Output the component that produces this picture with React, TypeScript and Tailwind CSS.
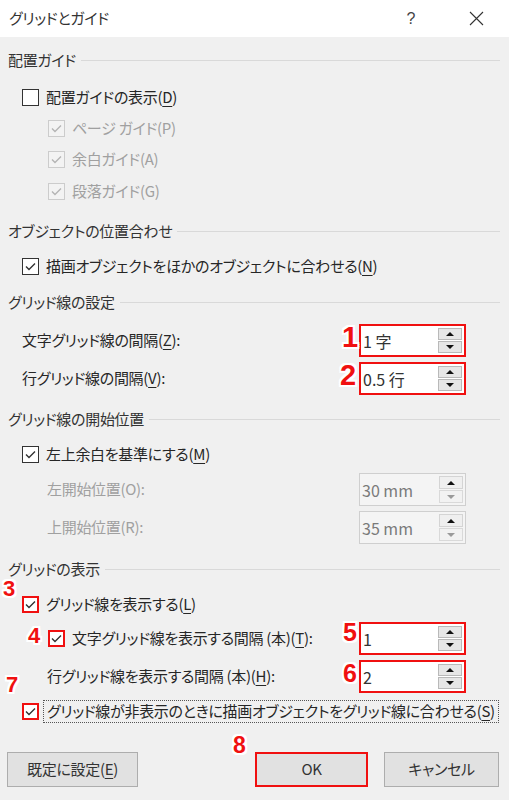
import React from "react";

const Tick = ({ color }: { color: string }) => (
  <svg width="13" height="13" viewBox="0 0 13 13" className="block">
    <polyline points="2,6.5 5,9.5 11,3.5" fill="none" stroke={color} strokeWidth="1.4" />
  </svg>
);

const Checkbox = ({ checked, disabled, red }: { checked?: boolean; disabled?: boolean; red?: boolean }) => {
  let cls = "border border-[#333] bg-white";
  if (disabled) cls = "border border-[#cccccc] bg-[#f3f3f3]";
  if (red) cls = "border-2 border-[#f01010] bg-white";
  return (
    <div className={`w-[17px] h-[17px] shrink-0 flex items-center justify-center ${cls}`}>
      {checked && <Tick color={disabled ? "#b4b4b4" : "#333"} />}
    </div>
  );
};

const Acc = ({ c }: { c: string }) => <span className="underline underline-offset-[3px] decoration-1">{c}</span>;

const Header = ({ title }: { title: string }) => (
  <div className="flex items-center h-[22px] gap-[5px] pr-[1px]">
    <span className="text-[15px] text-[#333]">{title}</span>
    <div className="flex-1 h-px bg-[#d9d9d9]" />
  </div>
);

const Arrow = ({ up, color }: { up?: boolean; color: string }) => (
  <svg width="8" height="4" viewBox="0 0 8 4" className="block">
    <polygon points={up ? "0,4 8,4 4,0" : "0,0 8,0 4,4"} fill={color} />
  </svg>
);

const Spinner = ({ value, disabled, red }: { value: string; disabled?: boolean; red?: boolean }) => {
  let box = "border border-[#adadad] bg-white text-[#333]";
  if (disabled) box = "border border-[#cfcfcf] bg-[#f4f4f4] text-[#7a7a7a]";
  if (red) box = "border-2 border-[#f01010] bg-white text-[#333]";
  return (
    <div className={`w-[107px] h-[33px] flex tracking-normal ${box}`}>
      <div className="flex-1 flex items-center pl-[2px] text-[16px]">{value}</div>
      <div className="w-[26px] flex flex-col gap-px py-[2px] pr-[2px]">
        <div className={`flex-1 flex items-center justify-center border ${disabled ? "border-[#d4d4d4] bg-[#efefef]" : "border-[#b9b9b9] bg-[#e6e6e6]"}`}>
          <Arrow up color="#111" />
        </div>
        <div className={`flex-1 flex items-center justify-center border ${disabled ? "border-[#d9d9d9] bg-[#f2f2f2]" : "border-[#b9b9b9] bg-[#e6e6e6]"}`}>
          <Arrow color={disabled ? "#9a9a9a" : "#111"} />
        </div>
      </div>
    </div>
  );
};

const Num = ({ n, x, y, size }: { n: string; x: number; y: number; size: string }) => (
  <span
    className={`absolute font-bold leading-none tracking-normal text-[#f01010] font-['Liberation_Sans',sans-serif] ${size} [text-shadow:2px_0_0_#fff,-2px_0_0_#fff,0_2px_0_#fff,0_-2px_0_#fff,2px_2px_0_#fff,-2px_-2px_0_#fff,2px_-2px_0_#fff,-2px_2px_0_#fff]`}
    style={{ left: x, top: y }}
  >
    {n}
  </span>
);

const Button = ({ children, w, red }: { children: React.ReactNode; w: string; red?: boolean }) => (
  <div
    className={`${w} h-[35px] flex items-center justify-center bg-[#e1e1e1] text-[15px] text-[#333] ${
      red ? "border-2 border-[#f01010]" : "border border-[#adadad]"
    }`}
  >
    {children}
  </div>
);

export default function App() {
  return (
    <div className="relative w-[509px] h-[800px] bg-[#f0f0f0] text-[#262626] tracking-[-0.3px] font-['Noto_Sans_CJK_JP','Noto_Sans',sans-serif] [font-feature-settings:'palt'] overflow-hidden">
      <div className="h-[37px] bg-white flex items-center pl-[9px] text-[15px] text-[#333]">
        <span>グリッドとガイド</span>
        <span className="ml-auto text-[16px] font-['Liberation_Sans',sans-serif] text-[#444]">?</span>
        <svg width="15" height="15" viewBox="0 0 15 15" className="ml-[54px] mr-[25px]">
          <path d="M1 1 L14 14 M14 1 L1 14" stroke="#333" strokeWidth="1.1" />
        </svg>
      </div>

      <div className="flex flex-col px-[8px] pt-[12px]">
        <Header title="配置ガイド" />
        <div className="mt-[13px] h-[26px] flex items-center gap-[7px] pl-[14px] text-[15px]">
          <Checkbox />
          <span>配置ガイドの表示(<Acc c="D" />)</span>
        </div>
        <div className="mt-[5px] h-[26px] flex items-center gap-[7px] pl-[40px] text-[15px] text-[#a0a0a0]">
          <Checkbox checked disabled />
          <span>ページ ガイド(P)</span>
        </div>
        <div className="mt-[5px] h-[26px] flex items-center gap-[7px] pl-[40px] text-[15px] text-[#a0a0a0]">
          <Checkbox checked disabled />
          <span>余白ガイド(A)</span>
        </div>
        <div className="mt-[6px] h-[26px] flex items-center gap-[7px] pl-[40px] text-[15px] text-[#a0a0a0]">
          <Checkbox checked disabled />
          <span>段落ガイド(G)</span>
        </div>

        <div className="mt-[16px]">
          <Header title="オブジェクトの位置合わせ" />
        </div>
        <div className="mt-[11px] h-[26px] flex items-center gap-[7px] pl-[14px] text-[15px]">
          <Checkbox checked />
          <span>描画オブジェクトをほかのオブジェクトに合わせる(<Acc c="N" />)</span>
        </div>

        <div className="mt-[12px]">
          <Header title="グリッド線の設定" />
        </div>
        <div className="mt-[11px] h-[33px] flex items-center pl-[14px] pr-[35px] text-[15px]">
          <span className="flex-1">文字グリッド線の間隔(<Acc c="Z" />):</span>
          <Spinner value="1 字" red />
        </div>
        <div className="mt-[5px] h-[33px] flex items-center pl-[14px] pr-[35px] text-[15px]">
          <span className="flex-1">行グリッド線の間隔(<Acc c="V" />):</span>
          <Spinner value="0.5 行" red />
        </div>

        <div className="mt-[13px]">
          <Header title="グリッド線の開始位置" />
        </div>
        <div className="mt-[11px] h-[26px] flex items-center gap-[7px] pl-[14px] text-[15px]">
          <Checkbox checked />
          <span>左上余白を基準にする(<Acc c="M" />)</span>
        </div>
        <div className="mt-[6px] h-[33px] flex items-center pl-[39px] pr-[35px] text-[15px] text-[#a0a0a0]">
          <span className="flex-1">左開始位置(O):</span>
          <Spinner value="30 mm" disabled />
        </div>
        <div className="mt-[5px] h-[33px] flex items-center pl-[39px] pr-[35px] text-[15px] text-[#a0a0a0]">
          <span className="flex-1">上開始位置(R):</span>
          <Spinner value="35 mm" disabled />
        </div>

        <div className="mt-[14px]">
          <Header title="グリッドの表示" />
        </div>
        <div className="mt-[11px] h-[26px] flex items-center gap-[7px] pl-[14px] text-[15px]">
          <Checkbox checked red />
          <span>グリッド線を表示する(<Acc c="L" />)</span>
        </div>
        <div className="mt-[5px] h-[33px] flex items-center pl-[40px] pr-[35px] text-[15px]">
          <div className="flex-1 flex items-center gap-[7px]">
            <Checkbox checked red />
            <span>文字グリッド線を表示する間隔 (本)(<Acc c="T" />):</span>
          </div>
          <Spinner value="1" red />
        </div>
        <div className="mt-[5px] h-[33px] flex items-center pl-[39px] pr-[35px] text-[15px]">
          <span className="flex-1">行グリッド線を表示する間隔 (本)(<Acc c="H" />):</span>
          <Spinner value="2" red />
        </div>
        <div className="mt-[6px] h-[24px] flex items-center gap-[4px] pl-[14px] text-[15px]">
          <Checkbox checked red />
          <span className="flex-1 h-[23px] mr-[2px] flex items-center pl-[3px] whitespace-nowrap overflow-hidden border border-dotted border-[#555]">
            グリッド線が非表示のときに描画オブジェクトをグリッド線に合わせる(<Acc c="S" />)
          </span>
        </div>

        <div className="mt-[29px] -mx-px flex items-center">
          <Button w="w-[131px]">
            既定に設定(<Acc c="E" />)
          </Button>
          <div className="flex-1" />
          <Button w="w-[113px]" red>
            OK
          </Button>
          <div className="w-[16px]" />
          <Button w="w-[115px]">キャンセル</Button>
          <div className="w-[3px]" />
        </div>
      </div>

      <Num n="1" x={342} y={323} size="text-[29px]" />
      <Num n="2" x={340} y={361} size="text-[29px]" />
      <Num n="3" x={3} y={578} size="text-[22px]" />
      <Num n="4" x={28} y={625} size="text-[22px]" />
      <Num n="5" x={343} y={620} size="text-[25px]" />
      <Num n="6" x={343} y={661} size="text-[25px]" />
      <Num n="7" x={6} y={674} size="text-[22px]" />
      <Num n="8" x={233} y={734} size="text-[23px]" />
    </div>
  );
}
